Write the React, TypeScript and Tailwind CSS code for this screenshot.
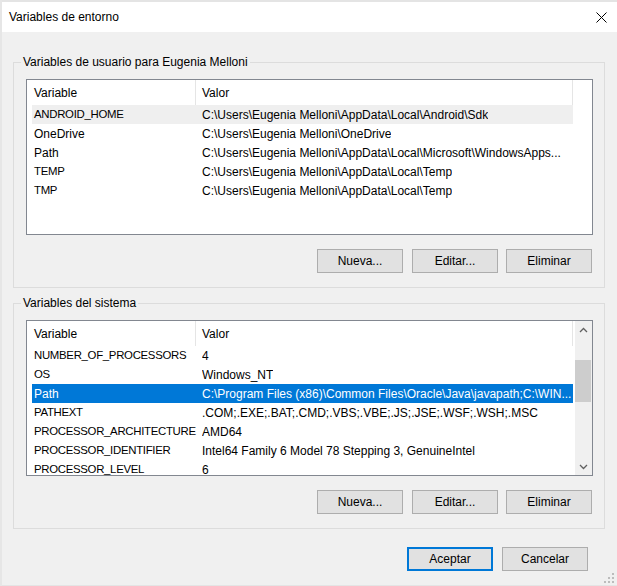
import React from "react";

type Row = { name: string; value: string };

const userVars: Row[] = [
  { name: "ANDROID_HOME", value: "C:\\Users\\Eugenia Melloni\\AppData\\Local\\Android\\Sdk" },
  { name: "OneDrive", value: "C:\\Users\\Eugenia Melloni\\OneDrive" },
  { name: "Path", value: "C:\\Users\\Eugenia Melloni\\AppData\\Local\\Microsoft\\WindowsApps..." },
  { name: "TEMP", value: "C:\\Users\\Eugenia Melloni\\AppData\\Local\\Temp" },
  { name: "TMP", value: "C:\\Users\\Eugenia Melloni\\AppData\\Local\\Temp" },
];

const systemVars: Row[] = [
  { name: "NUMBER_OF_PROCESSORS", value: "4" },
  { name: "OS", value: "Windows_NT" },
  { name: "Path", value: "C:\\Program Files (x86)\\Common Files\\Oracle\\Java\\javapath;C:\\WIN..." },
  { name: "PATHEXT", value: ".COM;.EXE;.BAT;.CMD;.VBS;.VBE;.JS;.JSE;.WSF;.WSH;.MSC" },
  { name: "PROCESSOR_ARCHITECTURE", value: "AMD64" },
  { name: "PROCESSOR_IDENTIFIER", value: "Intel64 Family 6 Model 78 Stepping 3, GenuineIntel" },
  { name: "PROCESSOR_LEVEL", value: "6" },
];

function Button({ label, primary }: { label: string; primary?: boolean }) {
  return (
    <button
      className={
        "w-[86px] h-[24px] bg-[#e1e1e1] text-black flex items-center justify-center " +
        (primary ? "border-2 border-[#0078d7]" : "border border-[#adadad]")
      }
    >
      {label}
    </button>
  );
}

function Header() {
  return (
    <div className="flex h-[25px] items-center shrink-0 bg-white">
      <div className="w-[169px] h-full flex items-center pl-[7px] border-r border-[#e5e5e5]">Variable</div>
      <div className="w-[377px] h-full flex items-center pl-[6px] border-r border-[#e5e5e5]">Valor</div>
    </div>
  );
}

function Rows({ rows, selected, focused }: { rows: Row[]; selected: number; focused: boolean }) {
  return (
    <div className="flex flex-col pl-[5px]">
      {rows.map((r, i) => {
        const sel = i === selected;
        const cls = sel ? (focused ? "bg-[#0078d7] text-white" : "bg-[#efefef]") : "";
        const caps = r.name === r.name.toUpperCase();
        return (
          <div key={r.name} className={"flex h-[19px] w-[541px] items-center " + cls}>
            <div
              className={
                "w-[170px] pl-[2px] whitespace-nowrap overflow-hidden " +
                (caps ? "text-[11.4px] tracking-[-0.3px]" : "")
              }
            >
              {r.name}
            </div>
            <div className="whitespace-nowrap overflow-hidden">{r.value}</div>
          </div>
        );
      })}
    </div>
  );
}

function Chevron({ up }: { up?: boolean }) {
  return (
    <svg width="9" height="6" viewBox="0 0 9 6">
      <path
        d={up ? "M1 5 L4.5 1.5 L8 5" : "M1 1 L4.5 4.5 L8 1"}
        fill="none"
        stroke="#606060"
        strokeWidth="1.3"
      />
    </svg>
  );
}

function Scrollbar() {
  return (
    <div className="w-[17px] h-full bg-[#f0f0f0] flex flex-col shrink-0">
      <div className="h-[17px] flex items-center justify-center">
        <Chevron up />
      </div>
      <div className="h-[22px]" />
      <div className="h-[42px] mr-[1px] bg-[#cdcdcd]" />
      <div className="flex-1" />
      <div className="h-[17px] flex items-center justify-center">
        <Chevron />
      </div>
    </div>
  );
}

function Group({
  title,
  rows,
  selected,
  focused,
  scroll,
}: {
  title: string;
  rows: Row[];
  selected: number;
  focused: boolean;
  scroll?: boolean;
}) {
  return (
    <div className="relative w-[592px] h-[226px] ml-[11px] border border-[#dcdcdc] pl-[12px] pt-[16px] flex flex-col">
      <span className="absolute left-[7px] top-[-9px] px-[2px] bg-[#f0f0f0] leading-[16px]">{title}</span>
      <div className="w-[567px] h-[156px] border border-[#828790] bg-white flex overflow-hidden">
        <div className="flex-1 flex flex-col overflow-hidden">
          <Header />
          <Rows rows={rows} selected={selected} focused={focused} />
        </div>
        {scroll && <Scrollbar />}
      </div>
      <div className="w-[567px] flex justify-end pr-[1px] mt-[14px]">
        <div className="mr-[9px]">
          <Button label="Nueva..." />
        </div>
        <div className="mr-[8px]">
          <Button label="Editar..." />
        </div>
        <Button label="Eliminar" />
      </div>
    </div>
  );
}

export default function App() {
  return (
    <div className="w-[617px] h-[586px] flex bg-[#e4e4e4] text-[12px] text-black font-['Segoe_UI','Liberation_Sans',sans-serif] overflow-hidden">
      <div className="w-[2px] shrink-0 bg-[#e6e6e6]" />
      <div className="flex-1 flex flex-col pt-[2px] pb-[1px]">
        <div className="h-[30px] bg-white flex items-center justify-between pl-[7px] pr-[10px] shrink-0">
          <span className="text-[12px]">Variables de entorno</span>
          <svg width="11" height="11" viewBox="0 0 11 11">
            <path d="M0.5 0.5 L10.5 10.5 M10.5 0.5 L0.5 10.5" stroke="#000" strokeWidth="1" />
          </svg>
        </div>
        <div className="flex-1 bg-[#f0f0f0] flex flex-col relative">
          <div className="mt-[30px]">
            <Group title="Variables de usuario para Eugenia Melloni" rows={userVars} selected={0} focused={false} />
          </div>
          <div className="mt-[15px]">
            <Group title="Variables del sistema" rows={systemVars} selected={2} focused={true} scroll />
          </div>
          <div className="mt-[18px] flex justify-end pr-[29px] gap-[9px]">
            <Button label="Aceptar" primary />
            <Button label="Cancelar" />
          </div>
          <svg className="absolute right-[2px] bottom-[1px]" width="11" height="11" viewBox="0 0 11 11">
            {[
              [9, 1],
              [9, 5],
              [5, 5],
              [9, 9],
              [5, 9],
              [1, 9],
            ].map(([x, y]) => (
              <rect key={`${x}-${y}`} x={x - 1} y={y - 1} width="2" height="2" fill="#bcbcbc" />
            ))}
          </svg>
        </div>
      </div>
    </div>
  );
}
